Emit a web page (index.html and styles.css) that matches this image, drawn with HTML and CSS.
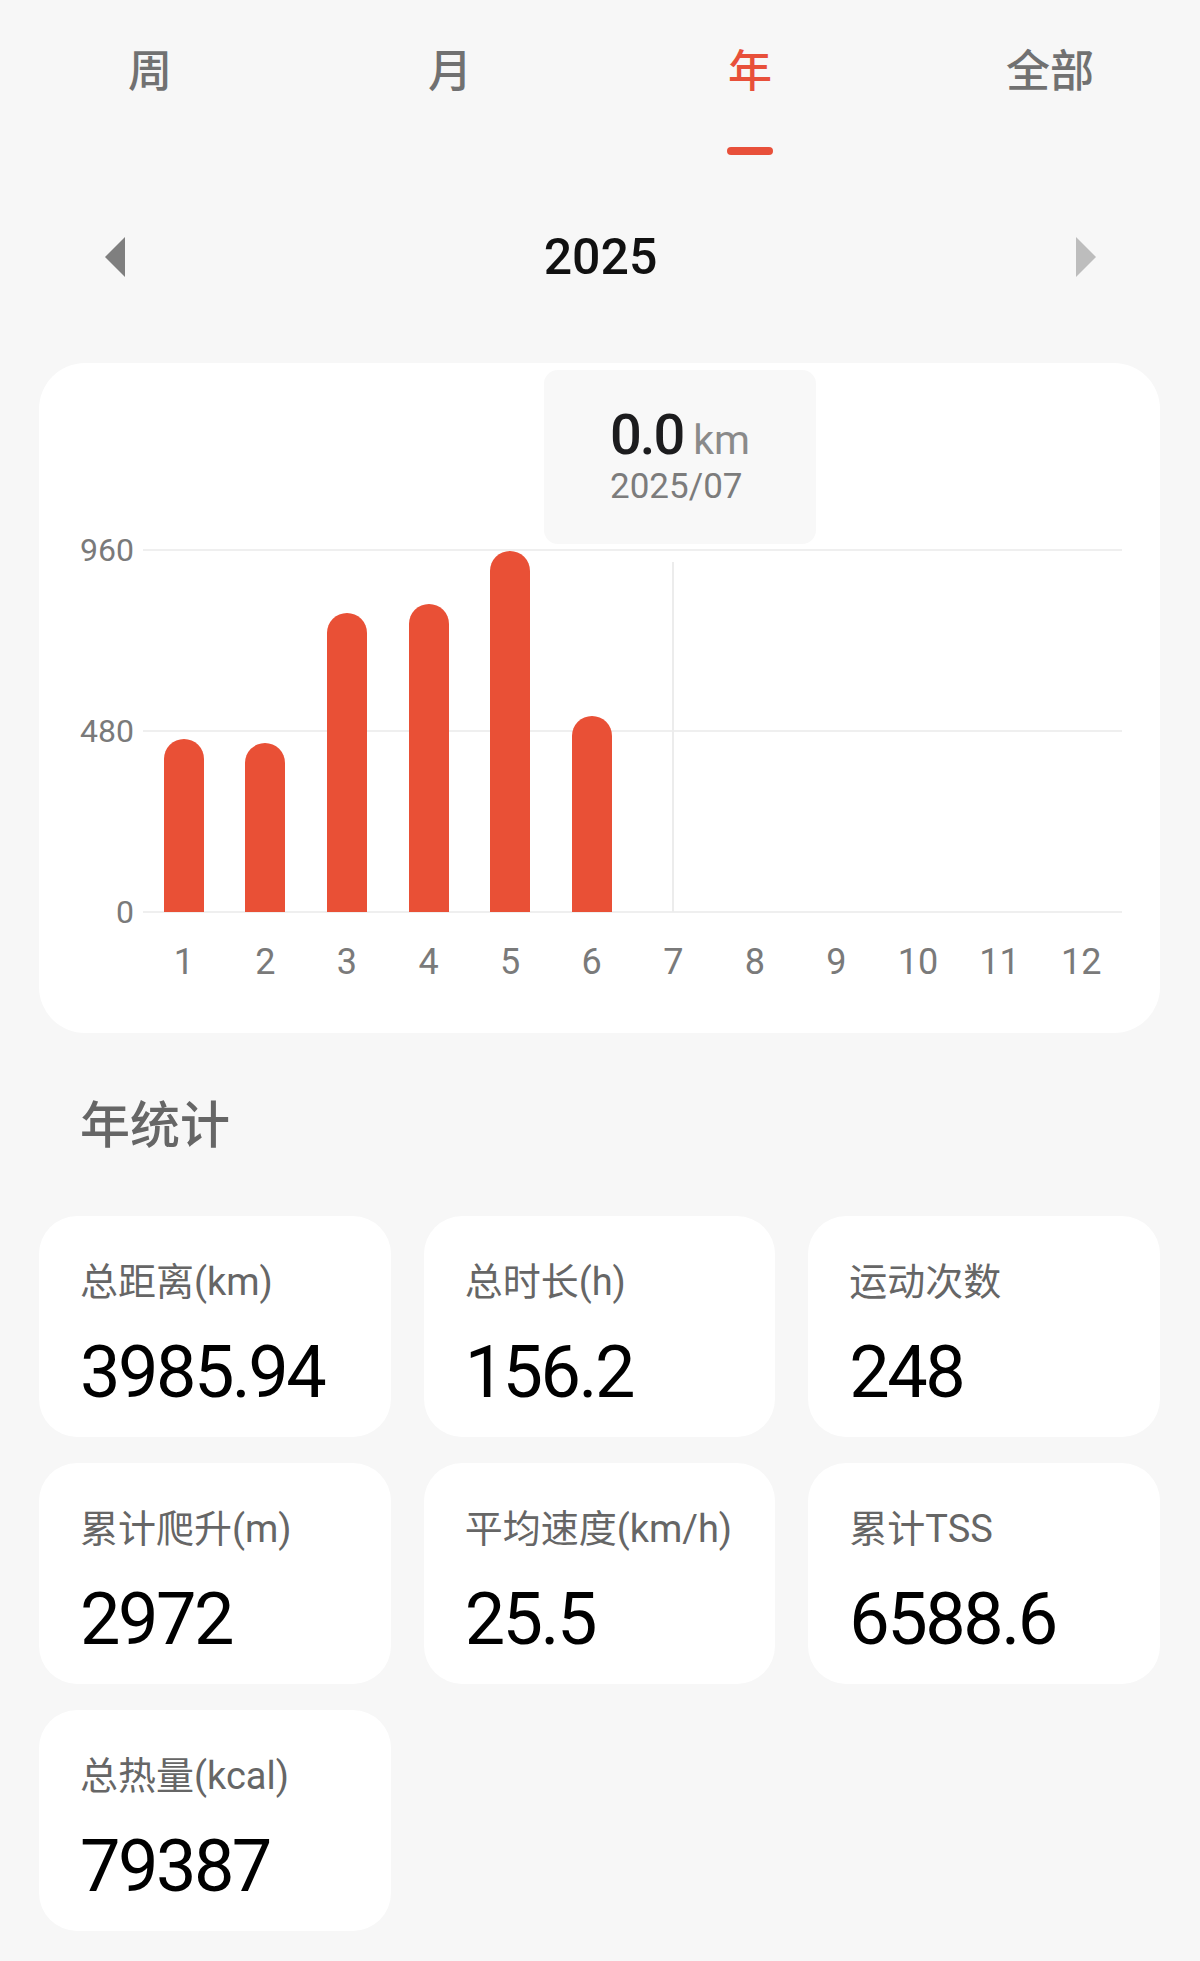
FILE: index.html
```html
<!DOCTYPE html>
<html lang="zh-CN">
<head>
  <meta charset="UTF-8" />
  <meta name="viewport" content="width=device-width, initial-scale=1.0"/>
  <title>年统计</title>
  <link rel="stylesheet" href="styles.css">
</head>
<body>

  <!-- Period tabs -->
  <nav class="tabs">
    <div class="tab">周</div>
    <div class="tab">月</div>
    <div class="tab active">年</div>
    <div class="tab">全部</div>
  </nav>

  <!-- Year switcher -->
  <div class="year-bar">
    <svg class="arrow prev" width="20" height="40" viewBox="0 0 20 40"><polygon points="20,0 0,20 20,40"/></svg>
    <div class="year">2025</div>
    <svg class="arrow next" width="20" height="40" viewBox="0 0 20 40"><polygon points="0,0 20,20 0,40"/></svg>
  </div>

  <div class="content">

    <!-- Monthly distance chart -->
    <section class="chart-card">
      <div class="tooltip">
        <div class="tip-inner">
          <div class="tip-value">0.0<span class="tip-unit">km</span></div>
          <div class="tip-date">2025/07</div>
        </div>
      </div>

      <div class="chart">
        <div class="y-axis">
          <span>960</span>
          <span>480</span>
          <span>0</span>
        </div>
        <div class="plot-wrap">
          <div class="plot">
            <div class="grid-line top"></div>
            <div class="grid-line mid"></div>
            <div class="grid-line bottom"></div>
            <div class="col"><div class="bar" style="height: 173px"></div></div>
            <div class="col"><div class="bar" style="height: 169px"></div></div>
            <div class="col"><div class="bar" style="height: 299px"></div></div>
            <div class="col"><div class="bar" style="height: 308px"></div></div>
            <div class="col"><div class="bar" style="height: 361px"></div></div>
            <div class="col"><div class="bar" style="height: 196px"></div></div>
            <div class="col"><div class="cursor"></div></div>
            <div class="col"></div>
            <div class="col"></div>
            <div class="col"></div>
            <div class="col"></div>
            <div class="col"></div>
          </div>
          <div class="x-axis">
            <span>1</span><span>2</span><span>3</span><span>4</span>
            <span>5</span><span>6</span><span>7</span><span>8</span>
            <span>9</span><span>10</span><span>11</span><span>12</span>
          </div>
        </div>
      </div>
    </section>

    <h2 class="section-title">年统计</h2>

    <!-- Year totals -->
    <div class="stats">
      <div class="stat-card">
        <div class="stat-label">总距离(km)</div>
        <div class="stat-value">3985.94</div>
      </div>
      <div class="stat-card">
        <div class="stat-label">总时长(h)</div>
        <div class="stat-value">156.2</div>
      </div>
      <div class="stat-card">
        <div class="stat-label">运动次数</div>
        <div class="stat-value">248</div>
      </div>
      <div class="stat-card">
        <div class="stat-label">累计爬升(m)</div>
        <div class="stat-value">2972</div>
      </div>
      <div class="stat-card">
        <div class="stat-label">平均速度(km/h)</div>
        <div class="stat-value">25.5</div>
      </div>
      <div class="stat-card">
        <div class="stat-label">累计TSS</div>
        <div class="stat-value">6588.6</div>
      </div>
      <div class="stat-card">
        <div class="stat-label">总热量(kcal)</div>
        <div class="stat-value">79387</div>
      </div>
    </div>

  </div>

</body>
</html>
```

FILE: styles.css
```css
* {
  box-sizing: border-box;
}
html, body {
  margin: 0;
  background: #f7f7f7;
}
body {
  min-height: 1961px;
  font-family: Roboto, "Noto Sans CJK SC", sans-serif;
  color: #111;
}

/* tabs */
.tabs {
  display: flex;
  height: 155px;
  padding-top: 38px;
}
.tab {
  flex: 1;
  text-align: center;
  font-family: "Noto Sans CJK SC", sans-serif;
  font-size: 44px;
  line-height: 60px;
  font-weight: 500;
  color: #717171;
}
.tab.active {
  color: #e8503a;
}
.tab.active::after {
  content: "";
  display: block;
  width: 46px;
  height: 8px;
  margin: 49px auto 0;
  border-radius: 4px;
  background: #e8503a;
}

/* year switcher */
.year-bar {
  display: flex;
  align-items: center;
  justify-content: space-between;
  height: 80px;
  margin-top: 62px;
  padding: 0 104px 0 105px;
}
.year {
  font-size: 50px;
  line-height: 80px;
  font-weight: 500;
  color: #111;
}
.arrow.prev {
  fill: #7f7f7f;
}
.arrow.next {
  fill: #bdbdbd;
}

.content {
  padding: 0 40px 0 39px;
}

/* chart */
.chart-card {
  position: relative;
  height: 670px;
  margin-top: 66px;
  padding: 187px 38px 0 0;
  background: white;
  border-radius: 46px;
}
.tooltip {
  position: absolute;
  top: 7px;
  left: 505px;
  width: 272px;
  height: 174px;
  display: flex;
  align-items: center;
  justify-content: center;
  background: #f8f8f8;
  border-radius: 14px;
  z-index: 2;
}
.tip-value {
  font-size: 56px;
  line-height: 56px;
  font-weight: 500;
  letter-spacing: -2px;
  color: #1c1c1e;
}
.tip-unit {
  margin-left: 10px;
  font-size: 41px;
  letter-spacing: 0;
  font-weight: 400;
  color: #8a8a8a;
}
.tip-date {
  margin-top: -1px;
  font-size: 35px;
  line-height: 40px;
  color: #7c7c7c;
}
.chart {
  display: flex;
  align-items: flex-start;
}
.y-axis {
  width: 104px;
  height: 402px;
  margin-top: -20px;
  padding-right: 9px;
  display: flex;
  flex-direction: column;
  justify-content: space-between;
  align-items: flex-end;
  font-size: 32px;
  line-height: 40px;
  color: #7a7a7a;
}
.plot-wrap {
  flex: 1;
}
.plot {
  position: relative;
  display: flex;
  height: 362px;
}
.grid-line {
  position: absolute;
  left: 0;
  right: 0;
  height: 2px;
  background: #efefef;
}
.grid-line.top {
  top: -1px;
}
.grid-line.mid {
  top: 180px;
}
.grid-line.bottom {
  bottom: -1px;
}
.col {
  position: relative;
  flex: 1;
  display: flex;
  align-items: flex-end;
  justify-content: center;
}
.bar {
  position: relative;
  z-index: 1;
  width: 40px;
  background: #e95036;
  border-radius: 20px 20px 0 0;
}
.cursor {
  position: absolute;
  top: 12px;
  bottom: 0;
  left: 50%;
  width: 2px;
  margin-left: -1px;
  background: #ececec;
}
.x-axis {
  display: flex;
  margin-top: 28px;
  font-size: 36px;
  line-height: 44px;
  color: #7a7a7a;
}
.x-axis span {
  flex: 1;
  text-align: center;
}

/* stats */
.section-title {
  margin: 53px 0 60px;
  padding-left: 41px;
  font-family: "Noto Sans CJK SC", sans-serif;
  font-size: 50px;
  line-height: 70px;
  font-weight: 500;
  color: #666;
}
.stats {
  display: grid;
  grid-template-columns: repeat(3, 1fr);
  gap: 26px 33px;
}
.stat-card {
  height: 221px;
  padding: 43px 10px 0 41px;
  background: white;
  border-radius: 38px;
}
.stat-label {
  font-size: 38px;
  line-height: 46px;
  color: #666;
  white-space: nowrap;
}
.stat-value {
  margin-top: 28px;
  font-size: 72px;
  line-height: 80px;
  font-weight: 400;
  letter-spacing: -2.5px;
  color: #000;
}
```
